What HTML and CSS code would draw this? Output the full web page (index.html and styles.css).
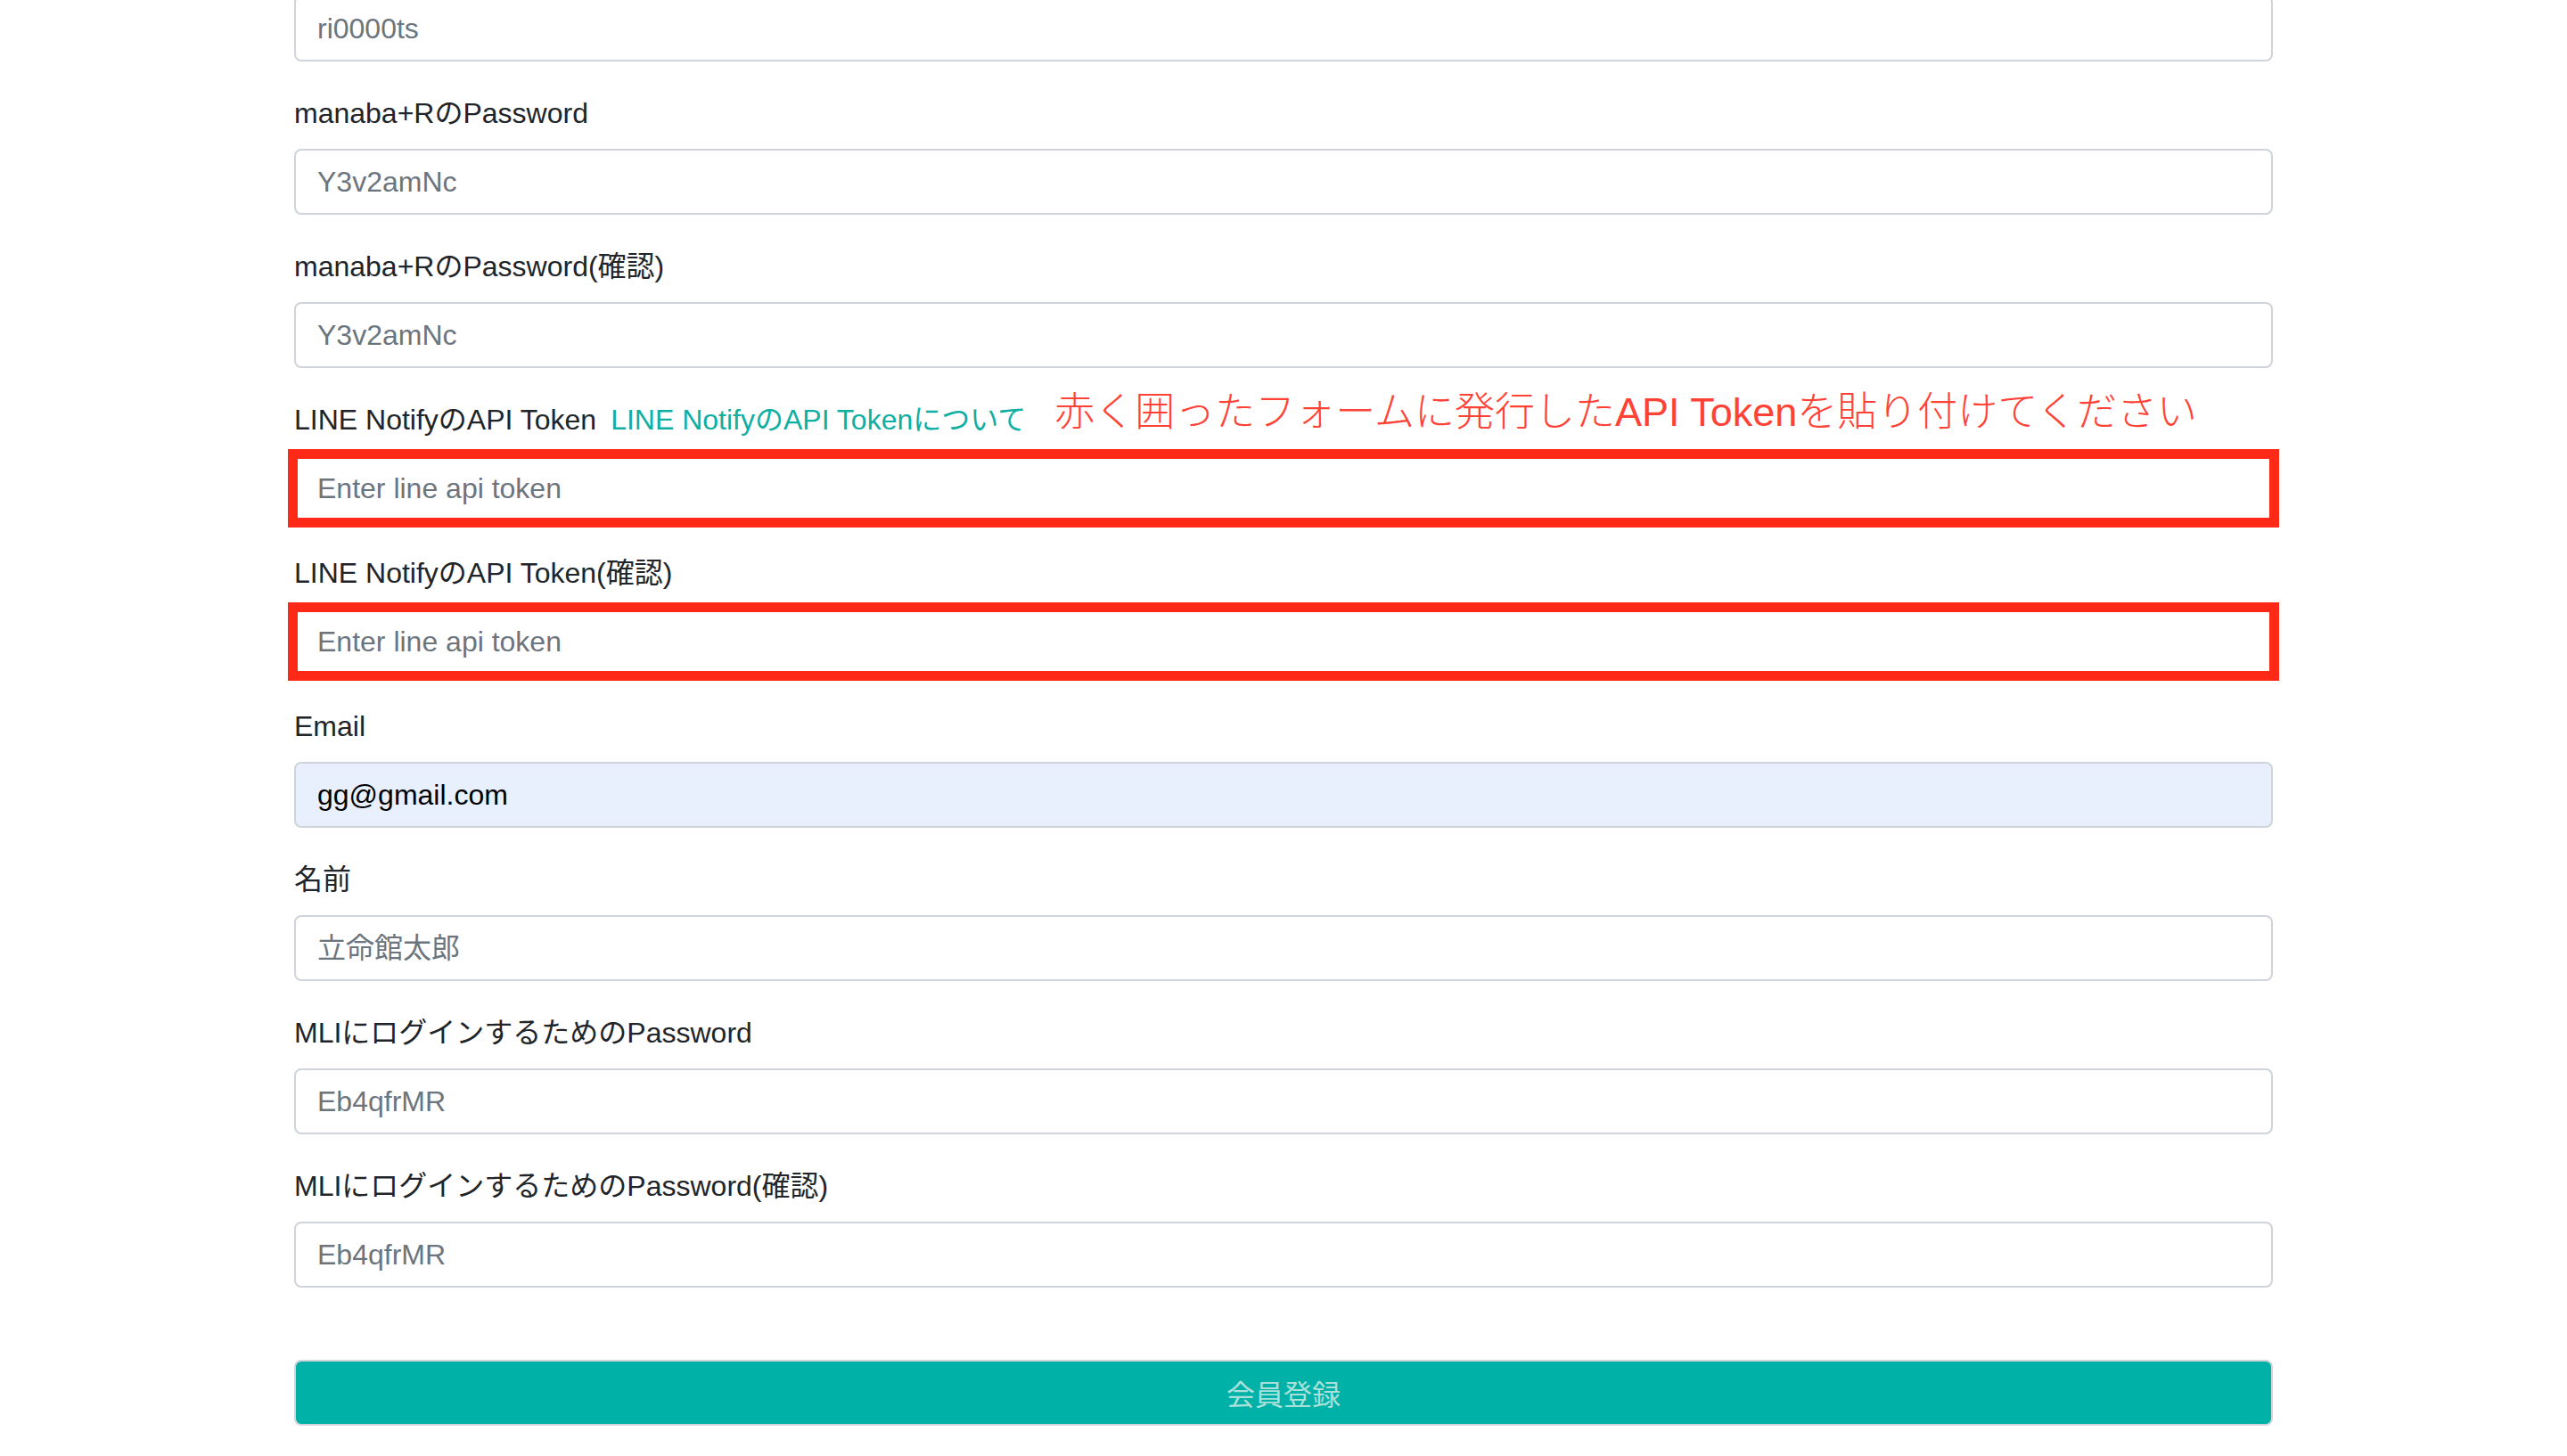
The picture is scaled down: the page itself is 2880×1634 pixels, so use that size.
FILE: index.html
```html
<!DOCTYPE html>
<html lang="ja">
<head>
<meta charset="utf-8">
<title>会員登録</title>
<link rel="stylesheet" href="styles.css">
</head>
<body>
<form class="container">
  <div class="group">
    <input class="field" type="text" placeholder="ri0000ts">
  </div>
  <div class="group">
    <label class="label">manaba+RのPassword</label>
    <input class="field" type="password" placeholder="Y3v2amNc">
  </div>
  <div class="group">
    <label class="label">manaba+RのPassword(確認)</label>
    <input class="field" type="password" placeholder="Y3v2amNc">
  </div>
  <div class="group">
    <label class="label">LINE NotifyのAPI Token<a class="link" href="#">LINE NotifyのAPI Tokenについて</a><span class="note">赤く囲ったフォームに発行したAPI Tokenを貼り付けてください</span></label>
    <input class="field marked" type="text" placeholder="Enter line api token">
  </div>
  <div class="group">
    <label class="label">LINE NotifyのAPI Token(確認)</label>
    <input class="field marked" type="text" placeholder="Enter line api token">
  </div>
  <div class="group">
    <label class="label">Email</label>
    <input class="field filled" type="email" value="gg@gmail.com">
  </div>
  <div class="group">
    <label class="label">名前</label>
    <input class="field" type="text" placeholder="立命館太郎">
  </div>
  <div class="group">
    <label class="label">MLIにログインするためのPassword</label>
    <input class="field" type="password" placeholder="Eb4qfrMR">
  </div>
  <div class="group">
    <label class="label">MLIにログインするためのPassword(確認)</label>
    <input class="field" type="password" placeholder="Eb4qfrMR">
  </div>
  <button class="submit" type="button">会員登録</button>
</form>
</body>
</html>
```
FILE: styles.css
```css
html, body {
  margin: 0;
  padding: 0;
  background: #ffffff;
  overflow: hidden;
}

body {
  font-family: "Liberation Sans", "Noto Sans CJK JP", sans-serif;
  color: #212529;
}

.container {
  width: 2220px;
  margin: -5px auto 0;
  display: flex;
  flex-direction: column;
}

.group {
  margin-bottom: 34px;
}

.label {
  display: block;
  height: 48px;
  font-size: 32px;
  line-height: 48px;
  margin-bottom: 16px;
  color: #212529;
  white-space: nowrap;
}

.link {
  color: #0fafa4;
  text-decoration: none;
  margin-left: 16px;
}

.note {
  color: #ff4236;
  font-size: 45px;
  font-weight: 300;
  line-height: 32px;
  margin-left: 32px;
  vertical-align: 4px;
}

.field {
  display: block;
  box-sizing: border-box;
  width: 100%;
  height: 74px;
  padding: 0 24px;
  border: 2px solid #ced4da;
  border-radius: 8px;
  background: #ffffff;
  font-family: "Liberation Sans", "Noto Sans CJK JP", sans-serif;
  font-size: 32px;
  color: #495057;
  outline: none;
}

.field::placeholder {
  color: #6c757d;
  opacity: 1;
}

.field.filled {
  background: #e8f0fe;
  color: #000000;
}

.field.marked {
  border-radius: 0;
  outline: 11px solid #fe2a17;
  outline-offset: -4px;
}

.submit {
  margin-top: 47px;
  height: 74px;
  width: 100%;
  box-sizing: border-box;
  border: 2px solid #d2d6da;
  border-radius: 8px;
  background: #00b1a7;
  color: #a9e0da;
  font-family: "Liberation Sans", "Noto Sans CJK JP", sans-serif;
  font-size: 32px;
  padding: 0;
}
```
